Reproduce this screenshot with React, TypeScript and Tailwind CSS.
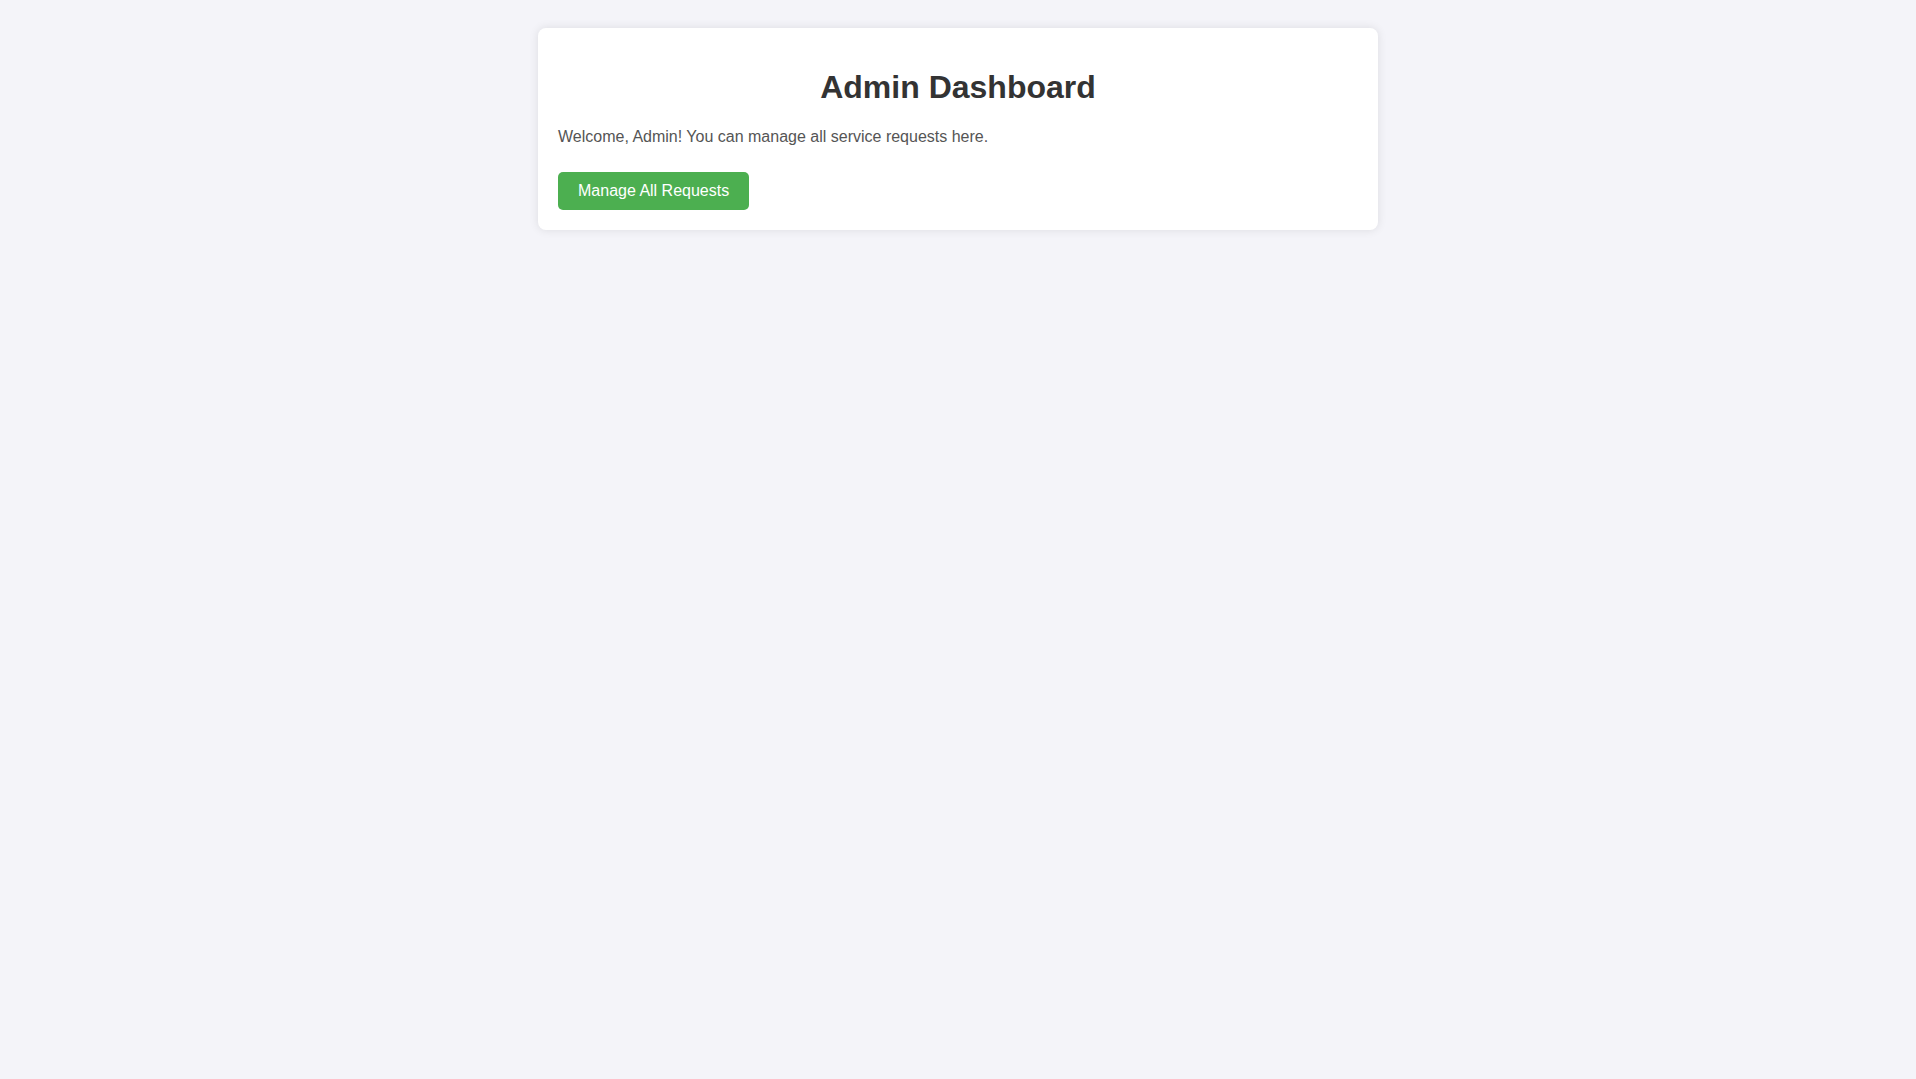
import React from 'react';

const App: React.FC = () => {
  return (
    <div className="min-h-screen bg-[#f4f4f9] pt-[28px] font-['Liberation_Sans',Arial,sans-serif]">
      {/* Dashboard card */}
      <div className="mx-auto w-[840px] rounded-[8px] bg-white p-[20px] shadow-[0_0_10px_rgba(0,0,0,0.1)]">
        <h1 className="mt-[21px] text-center text-[32px] font-bold leading-[37px] text-[#333]">
          Admin Dashboard
        </h1>
        <p className="mt-[22px] text-[16px] leading-[18px] text-[#555]">
          Welcome, Admin! You can manage all service requests here.
        </p>
        <div className="mt-[26px] flex">
          <a
            href="#"
            className="rounded-[5px] bg-[#4caf50] px-[20px] py-[10px] text-[16px] leading-[18px] text-white"
          >
            Manage All Requests
          </a>
        </div>
      </div>
    </div>
  );
};

export default App;
